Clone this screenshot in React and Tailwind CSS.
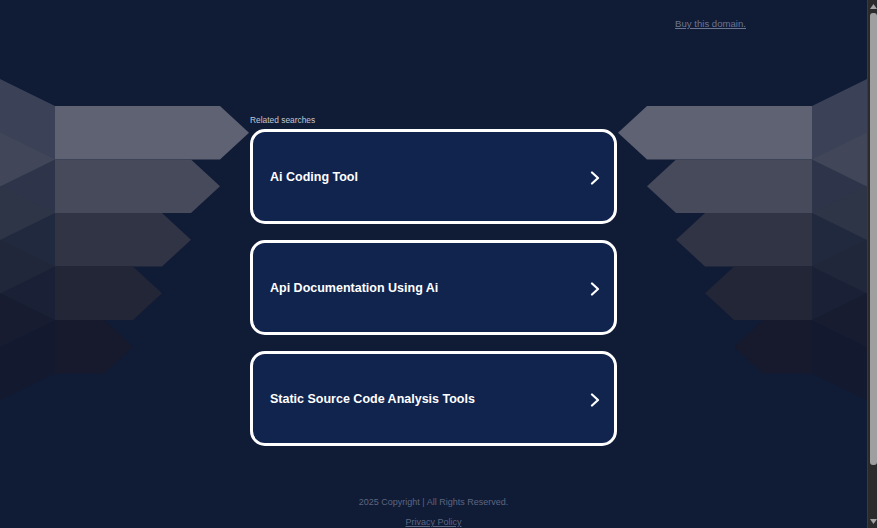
import React from 'react';

const searches = ['Ai Coding Tool', 'Api Documentation Using Ai', 'Static Source Code Analysis Tools'];

// arrow stack colours, lightest on top
const shades = ['#5e6272', '#474a5b', '#303445', '#222637', '#161a2c'];

function ArrowStack({ flip }) {
    const rows = shades.map((color, i) => {
        const top = 28 + 53.5 * i;
        const bottom = top + 53.5;
        const end = 220 - 29 * i;
        const tip = 249 - 29 * i;
        return { color, top, bottom, end, tip };
    });

    return (
        <svg width="250" height="325" viewBox="0 0 250 325" className="block shrink-0">
            <g transform={flip ? 'translate(250,0) scale(-1,1)' : undefined}>
                {rows.map((r, i) => (
                    <polygon
                        key={'f' + i}
                        points={`0,${r.top - 27} 55,${r.top} 55,${r.bottom} 0,${r.bottom + 27}`}
                        fill={r.color}
                        fillOpacity="0.55"
                    />
                ))}
                {rows.map((r, i) => (
                    <polygon
                        key={'b' + i}
                        points={`55,${r.top} ${r.end},${r.top} ${r.tip},${(r.top + r.bottom) / 2} ${r.end},${r.bottom} 55,${r.bottom}`}
                        fill={r.color}
                    />
                ))}
            </g>
        </svg>
    );
}

function Chevron() {
    return (
        <svg width="10" height="14" viewBox="0 0 10 14" fill="none" className="shrink-0">
            <path d="M2 1.5 L8 7 L2 12.5" stroke="#ffffff" strokeWidth="2.2" strokeLinecap="round" strokeLinejoin="round" />
        </svg>
    );
}

function ScrollTrack() {
    return (
        <div className="w-[11px] shrink-0 bg-[#2b2b2b] border-l border-[#3a3a3a] flex flex-col items-center">
            <svg width="7" height="6" viewBox="0 0 7 6" className="mt-[4px] shrink-0">
                <polygon points="3.5,0 7,5 0,5" fill="#a3a3a3" />
            </svg>
            <div className="w-[7px] h-[452px] mt-[3px] rounded-[3px] bg-[#9f9f9f]" />
            <div className="flex-1" />
            <svg width="7" height="6" viewBox="0 0 7 6" className="mb-[3px] shrink-0">
                <polygon points="0,0 7,0 3.5,5" fill="#a3a3a3" />
            </svg>
        </div>
    );
}

export default function App() {
    return (
        <div className="h-[528px] flex bg-[#101b36] font-['Liberation_Sans',Arial,sans-serif] overflow-hidden">
            <div className="flex-1 flex flex-col">
                <div className="flex justify-end pt-[18px] pr-[121px]">
                    <a href="#" className="text-[9.6px] leading-[11px] text-[#6b7590] underline">Buy this domain.</a>
                </div>

                <div className="flex justify-center mt-[49px]">
                    <div className="flex-1 flex justify-end overflow-hidden">
                        <ArrowStack />
                    </div>

                    <div className="w-[367px] shrink-0 pt-[37px]">
                        <div className="text-[8.4px] leading-[10px] text-[#c3c7d0] mb-[4px]">Related searches</div>
                        <div className="flex flex-col gap-[16px]">
                            {searches.map((s) => (
                                <a
                                    key={s}
                                    href="#"
                                    className="h-[95px] rounded-[15px] border-[3px] border-white bg-[#11244e] flex items-center justify-between pl-[17px] pr-[14px] pt-[2px]"
                                >
                                    <span className="text-white font-bold text-[12.5px]">{s}</span>
                                    <Chevron />
                                </a>
                            ))}
                        </div>
                    </div>

                    <div className="flex-1 flex justify-start overflow-hidden">
                        <ArrowStack flip />
                    </div>
                </div>

                <div className="flex flex-col items-center mt-[51px] text-[#5d6680]">
                    <div className="text-[9px] leading-[11px]">2025 Copyright | All Rights Reserved.</div>
                    <a href="#" className="text-[9px] leading-[11px] underline mt-[9px]">Privacy Policy</a>
                </div>
            </div>

            <ScrollTrack />
        </div>
    );
}
